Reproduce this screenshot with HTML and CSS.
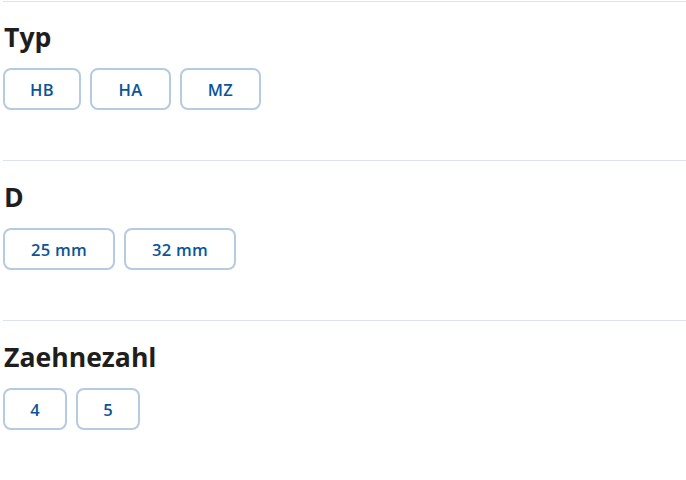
FILE: index.html
```html
<!DOCTYPE html>
<html lang="de">
  <head>
    <meta charset="UTF-8" />
    <title>Filter</title>
    <meta name="viewport" content="width=device-width, initial-scale=1.0" />
    <link rel="stylesheet" href="styles.css">
  </head>
  <body>
    <div class="filters">
      <section class="filter-group">
        <h2>Typ</h2>
        <div class="options">
          <button class="option">HB</button>
          <button class="option w81">HA</button>
          <button class="option w81">MZ</button>
        </div>
      </section>

      <section class="filter-group">
        <h2>D</h2>
        <div class="options">
          <button class="option wide">25 mm</button>
          <button class="option wide">32 mm</button>
        </div>
      </section>

      <section class="filter-group">
        <h2>Zaehnezahl</h2>
        <div class="options">
          <button class="option small">4</button>
          <button class="option small">5</button>
        </div>
      </section>
    </div>
  </body>
</html>
```

FILE: styles.css
```css
body {
  font-family: 'Open Sans', 'Noto Sans', sans-serif;
  background-color: white;
  margin: 0;
  padding: 0 0 0 3px;
}

.filter-group {
  border-top: 1px solid #dde3ec;
  height: 160px;
  box-sizing: border-box;
  padding-top: 17px;
}

.filter-group:first-child {
  margin-top: 1px;
  height: 159px;
  padding-top: 16px;
}

.filter-group h2 {
  margin: 0 0 12px 1px;
  font-size: 26.6px;
  font-weight: 700;
  color: #1e1e1e;
  line-height: 38px;
}

.options {
  display: flex;
  gap: 9px;
}

.option {
  width: 78px;
  height: 42px;
  padding: 0;
  background: white;
  border: 2px solid #b5cbe0;
  border-radius: 8px;
  color: #0a5597;
  font-family: inherit;
  font-size: 16.5px;
  font-weight: 600;
  letter-spacing: 0.3px;
  cursor: pointer;
}

.option.w81 {
  width: 81px;
}

.option.wide {
  width: 112px;
}

.option.small {
  width: 64px;
}
```
